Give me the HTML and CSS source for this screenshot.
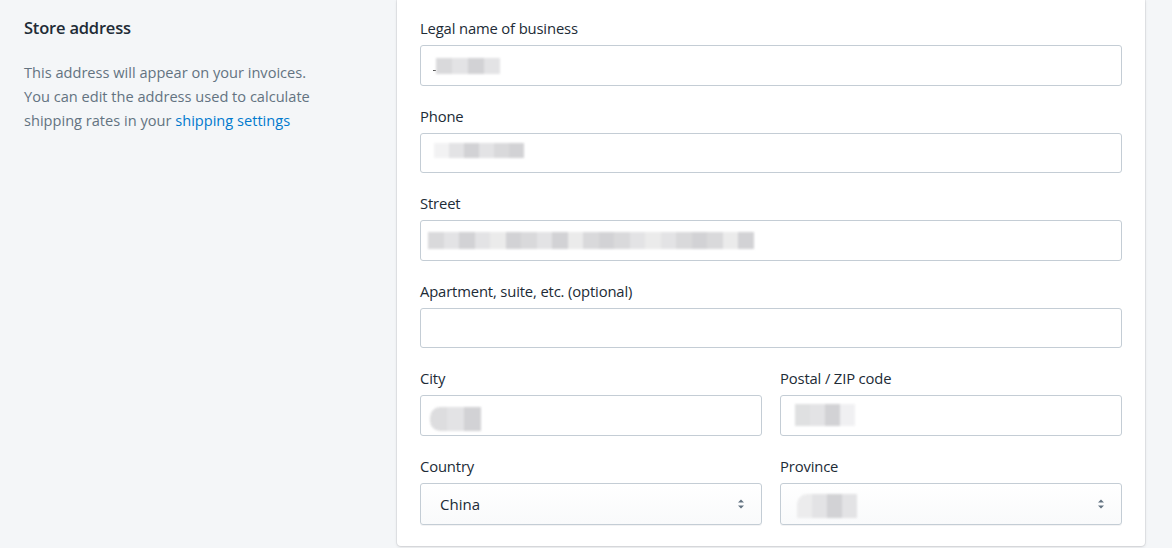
FILE: index.html
```html
<!DOCTYPE html>
<html lang="en">
<head>
<meta charset="utf-8">
<title>Store address</title>
<link rel="stylesheet" href="styles.css">
</head>
<body>
<div class="layout">
  <aside class="annotation">
    <h2 class="heading">Store address</h2>
    <p class="desc">This address will appear on your invoices. You can edit the address used to calculate shipping rates in your <a href="#" class="link">shipping settings</a></p>
  </aside>
  <section class="card">
    <div class="field">
      <label class="label">Legal name of business</label>
      <div class="input"><span class="dash"></span><span class="blur b-legal"><i></i><i></i><i></i><i></i></span></div>
    </div>
    <div class="field">
      <label class="label">Phone</label>
      <div class="input"><span class="blur b-phone"><i></i><i></i><i></i><i></i><i></i><i></i></span></div>
    </div>
    <div class="field">
      <label class="label">Street</label>
      <div class="input"><span class="blur b-street"><i></i><i></i><i></i><i></i><i></i><i></i><i></i><i></i><i></i><i></i><i></i><i></i><i></i><i></i><i></i><i></i><i></i><i></i><i></i><i></i><i></i></span></div>
    </div>
    <div class="field">
      <label class="label">Apartment, suite, etc. (optional)</label>
      <div class="input"></div>
    </div>
    <div class="row">
      <div class="field">
        <label class="label">City</label>
        <div class="input"><span class="blur b-city"><i></i><i></i><i></i></span></div>
      </div>
      <div class="field">
        <label class="label">Postal / ZIP code</label>
        <div class="input"><span class="blur b-zip"><i></i><i></i><i></i><i></i></span></div>
      </div>
    </div>
    <div class="row">
      <div class="field">
        <label class="label">Country</label>
        <div class="select"><span class="select-text">China</span>
          <svg class="arrows" viewBox="0 0 8 10" width="8" height="10"><path d="M4 0.5 L7 3.5 H1 Z M4 9.5 L7 6.5 H1 Z" fill="#637381"/></svg>
        </div>
      </div>
      <div class="field">
        <label class="label">Province</label>
        <div class="select"><span class="blur b-prov"><i></i><i></i><i></i><i></i></span>
          <svg class="arrows" viewBox="0 0 8 10" width="8" height="10"><path d="M4 0.5 L7 3.5 H1 Z M4 9.5 L7 6.5 H1 Z" fill="#637381"/></svg>
        </div>
      </div>
    </div>
  </section>
</div>
</body>
</html>
```

FILE: styles.css
```css
* { box-sizing: border-box; }
html, body { margin: 0; padding: 0; }
body {
  background: #f4f6f8;
  font-family: "Open Sans", "Noto Sans", "Liberation Sans", sans-serif;
  color: #212b36;
  width: 1172px;
  height: 548px;
  overflow: hidden;
}
.layout {
  display: flex;
  align-items: flex-start;
  padding-left: 24px;
}
.annotation {
  width: 373px;
  padding-top: 16px;
  padding-right: 70px;
}
.heading {
  margin: 0;
  font-size: 16.5px;
  font-weight: 600;
  line-height: 24px;
  letter-spacing: -0.2px;
}
.desc {
  margin: 20px 0 0;
  font-size: 14.6px;
  line-height: 24px;
  color: #637381;
}
.link { color: #007ace; text-decoration: none; }
.card {
  width: 748px;
  background: #fff;
  border-radius: 0 0 4px 4px;
  box-shadow: 0 0 0 1px rgba(63,63,68,0.07), 0 1px 3px 0 rgba(63,63,68,0.15);
  padding: 18px 23px 21px;
  display: flex;
  flex-direction: column;
  gap: 20px;
  height: 546px;
}
.row {
  display: grid;
  grid-template-columns: 1fr 1fr;
  gap: 18px;
}
.field { display: flex; flex-direction: column; }
.label {
  font-size: 14.8px;
  line-height: 20px;
  margin-bottom: 7px;
  letter-spacing: -0.15px;
}
.input {
  height: 40.5px;
  border: 1px solid #c4cdd5;
  border-radius: 3px;
  background: #fff;
  position: relative;
  display: flex;
  align-items: center;
  padding-left: 12px;
}
.select {
  height: 42px;
  border: 1px solid #c4cdd5;
  border-radius: 3px;
  background: linear-gradient(#fff, #f9fafb);
  box-shadow: 0 1px 0 0 rgba(22,29,37,0.05);
  display: flex;
  align-items: center;
  justify-content: space-between;
  padding: 0 16px 0 19px;
}
.select-text { font-size: 15px; color: #212b36; }
.arrows { display: block; }
.dash {
  position: absolute;
  left: 12px;
  top: 24px;
  width: 3px;
  height: 1px;
  background: #555;
}
.blur { display: flex; filter: blur(1.2px); opacity: 0.95; }
.blur i { display: block; width: 15px; height: 16px; background: #d8d8da; }
.blur i:nth-child(2n) { background: #e2e2e4; }
.blur i:nth-child(3n) { background: #d0d0d3; }
.b-legal { margin-left: 3px; margin-top: 1px; }
.b-legal i { width: 16px; }
.b-phone { margin-left: 1px; margin-top: -5px; }
.b-phone i { height: 15px; }
.b-phone i:first-child { background: #f2f2f3; }
.b-street { margin-left: -5px; margin-top: 1px; }
.b-street i { width: 15.5px; height: 17px; }
.b-street i:nth-child(5n) { background: #eaeaea; }
.b-city { margin-left: -3px; margin-top: 8px; }
.b-city i { width: 17px; height: 24px; background: #e4e4e6; }
.b-city i:first-child { background: #dcdcde; border-radius: 10px 0 0 10px; }
.b-zip { margin-left: 2px; margin-top: 0; }
.b-zip i { width: 15px; height: 22px; background: #dedfe0; }
.b-zip i:last-child { background: #f0f0f2; }
.b-prov { margin-left: -3px; margin-top: 4px; }
.b-prov i { width: 15px; height: 24px; background: #e0dfe0; }
.b-prov i:first-child { background: #ececed; border-radius: 10px 0 0 0; }
```
